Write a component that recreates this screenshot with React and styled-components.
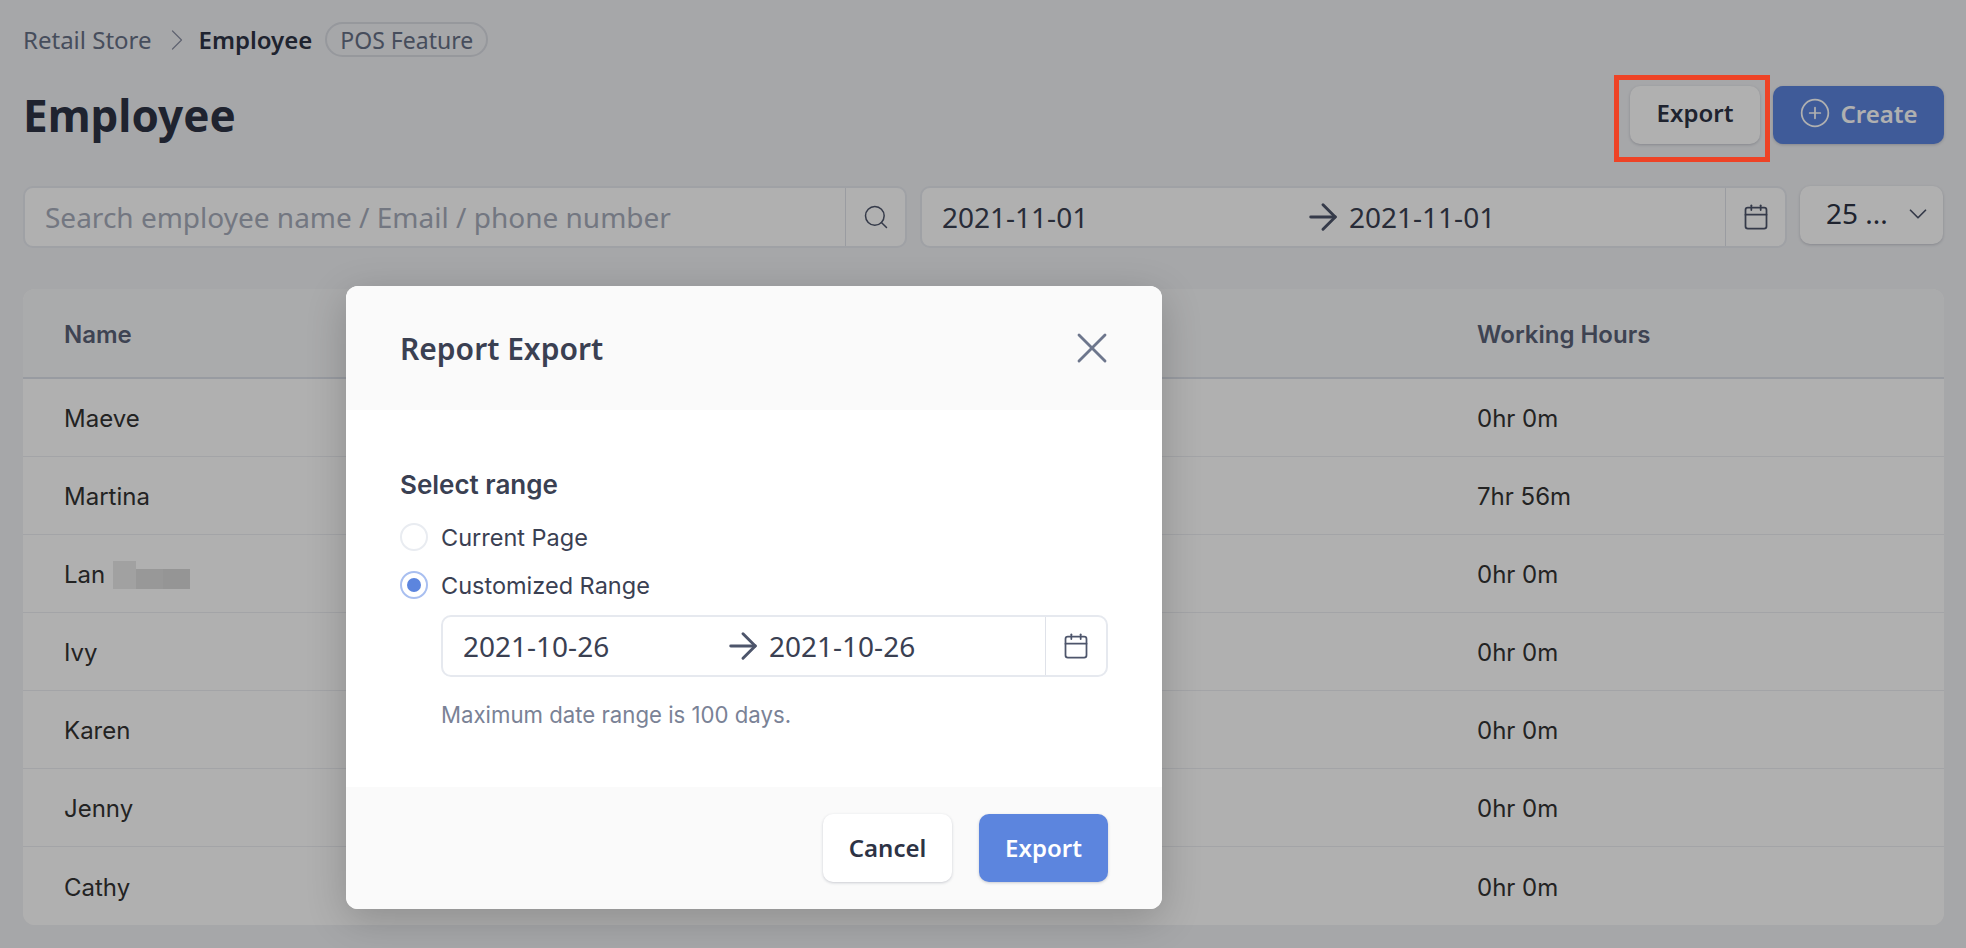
import React from 'react';
import styled, { createGlobalStyle } from 'styled-components';
import { ArrowRight, Calendar, ChevronDown, ChevronRight, CirclePlus, Search, X } from 'lucide-react';

const GlobalStyle = createGlobalStyle`
	html, body {
		margin: 0;
		padding: 0;
		height: 948px;
		overflow: hidden;
		background: #f1f2f5;
	}
	* {
		box-sizing: border-box;
	}
`;

const Page = styled.div`
	position: relative;
	width: 1966px;
	height: 948px;
	padding: 22px 22px 0 23px;
	font-family: "Noto Sans", sans-serif;
	color: #2d3345;
`;

const Breadcrumb = styled.div`
	display: flex;
	align-items: center;
	height: 35px;
	font-size: 24px;
`;

const Crumb = styled.span`
	color: #667086;
`;

const CrumbCurrent = styled.span`
	margin: 0 13px 0 4px;
	font-weight: 600;
	color: #2d3345;
`;

const Pill = styled.span`
	display: flex;
	align-items: center;
	height: 35px;
	padding: 0 13px;
	border: 2px solid #d9dce3;
	border-radius: 18px;
	font-size: 23px;
	color: #667086;
`;

const CrumbArrow = styled(ChevronRight)`
	margin-left: 7px;
	color: #8a91a3;
`;

const HeaderRow = styled.div`
	display: flex;
	align-items: center;
	justify-content: space-between;
	height: 58px;
	margin-top: 29px;
`;

const Title = styled.h1`
	margin: 0;
	font-size: 44px;
	font-weight: 700;
	line-height: 58px;
	color: #2d3345;
`;

const Actions = styled.div`
	display: flex;
	gap: 13px;
`;

const Button = styled.button`
	display: flex;
	align-items: center;
	justify-content: center;
	gap: 9px;
	position: relative;
	width: ${({ $width }) => $width}px;
	height: ${({ $height }) => $height || 58}px;
	padding: 0 0 ${({ $lift }) => $lift || 0}px;
	border: none;
	border-radius: 10px;
	background: ${({ $primary }) => ($primary ? '#5c85de' : '#fff')};
	box-shadow: 0 1px 3px rgba(30, 40, 70, 0.22);
	font-family: "Noto Sans", sans-serif;
	font-size: 24px;
	font-weight: 600;
	color: ${({ $primary }) => ($primary ? '#fff' : '#2d3345')};
`;

const RedMark = styled.span`
	position: absolute;
	top: -11px;
	left: -16px;
	right: -10px;
	bottom: -18px;
	border: 5px solid #ee4326;
	z-index: 5;
`;

const FilterRow = styled.div`
	display: flex;
	gap: 13px;
	margin-top: 42px;
	height: 62px;
`;

const Field = styled.div`
	display: flex;
	align-items: stretch;
	width: ${({ $width }) => $width}px;
	height: 62px;
	background: #fff;
	border: 2px solid #e6e9ef;
	border-radius: 10px;
`;

const FieldBody = styled.div`
	flex: 1;
	display: flex;
	align-items: center;
	padding-left: 20px;
	font-family: "Noto Sans", sans-serif;
	font-size: 28px;
	color: ${({ $muted }) => ($muted ? '#a7adbb' : '#3a4052')};
	white-space: nowrap;
`;

const FieldIcon = styled.div`
	display: flex;
	align-items: center;
	justify-content: center;
	width: ${({ $width }) => $width || 60}px;
	border-left: 1px solid #dfe2e9;
	color: #4d556b;
`;

const DateStart = styled.span`
	width: ${({ $width }) => $width}px;
`;

const ArrowIcon = styled(ArrowRight)`
	margin-right: 5px;
	color: #4d556b;
`;

const Select = styled.div`
	display: flex;
	align-items: center;
	justify-content: space-between;
	width: 143px;
	height: 58px;
	padding: 0 10px 4px 26px;
	background: #fff;
	border-radius: 10px;
	box-shadow: 0 1px 3px rgba(30, 40, 70, 0.22);
	font-size: 28px;
	color: #2d3345;
`;

const SelectArrow = styled(ChevronDown)`
	margin-top: 2px;
	color: #4d556b;
`;

const TableCard = styled.div`
	margin-top: 41px;
	width: 1921px;
	background: #fff;
	border-radius: 12px;
	overflow: hidden;
`;

const Row = styled.div`
	display: grid;
	grid-template-columns: 1413px 1fr;
	align-items: center;
	height: ${({ $head }) => ($head ? 90 : 78)}px;
	padding: 2px 0 0 41px;
	border-bottom: ${({ $head }) => ($head ? '2px solid #dde1e9' : '1px solid #eceef2')};
	background: ${({ $head }) => ($head ? '#f7f8fa' : '#fff')};
	font-family: Inter, sans-serif;
	font-size: 24px;
	font-weight: ${({ $head }) => ($head ? 600 : 400)};
	color: ${({ $head }) => ($head ? '#5a6278' : '#333')};
	&:last-child {
		border-bottom: none;
	}
`;

const NameCell = styled.div`
	display: flex;
	align-items: center;
`;

const Mosaic = styled.span`
	display: flex;
	align-items: flex-end;
	height: 28px;
	margin-left: 8px;
`;

const MosaicPiece = styled.span`
	width: ${({ $width }) => $width}px;
	height: ${({ $height }) => $height}px;
	background: ${({ $color }) => $color};
`;

const Scrim = styled.div`
	position: absolute;
	inset: 0;
	padding: 286px 0 0 346px;
	background: rgba(0, 0, 0, 0.31);
	z-index: 2;
`;

const Modal = styled.div`
	display: flex;
	flex-direction: column;
	width: 816px;
	height: 623px;
	background: #fff;
	border-radius: 12px;
	overflow: hidden;
	box-shadow: 0 10px 40px rgba(0, 0, 0, 0.2);
`;

const ModalHeader = styled.div`
	display: flex;
	align-items: center;
	justify-content: space-between;
	height: 124px;
	padding: 0 54px;
	background: #fafafa;
`;

const ModalTitle = styled.h2`
	margin: 0;
	font-size: 30px;
	font-weight: 600;
	color: #3a4052;
`;

const CloseIcon = styled(X)`
	margin-right: -10px;
	color: #6d768c;
`;

const ModalBody = styled.div`
	flex: 1;
	padding: 58px 54px 0;
	font-family: Inter, sans-serif;
`;

const SectionLabel = styled.div`
	font-size: 26px;
	font-weight: 600;
	line-height: 34px;
	color: #3a4052;
`;

const RadioRow = styled.label`
	display: flex;
	align-items: center;
	gap: 13px;
	height: 28px;
	margin-top: ${({ $gap }) => $gap}px;
	font-size: 23.5px;
	color: #3a4052;
`;

const Radio = styled.span`
	display: flex;
	align-items: center;
	justify-content: center;
	width: 28px;
	height: 28px;
	border-radius: 50%;
	border: 2px solid ${({ $checked }) => ($checked ? '#a9bff0' : '#e9ecf1')};
	&::after {
		content: '';
		display: ${({ $checked }) => ($checked ? 'block' : 'none')};
		width: 14px;
		height: 14px;
		border-radius: 50%;
		background: #5c85de;
	}
`;

const RangeBlock = styled.div`
	margin: 16px 0 0 41px;
`;

const Hint = styled.div`
	margin-top: 25px;
	font-size: 22.2px;
	line-height: 26px;
	color: #7a8296;
`;

const ModalFooter = styled.div`
	display: flex;
	justify-content: flex-end;
	gap: 27px;
	height: 122px;
	padding: 27px 54px 0;
	background: #fafafa;
`;

const people = [
	{ name: 'Maeve', hours: '0hr 0m' },
	{ name: 'Martina', hours: '7hr 56m' },
	{ name: 'Lan', hours: '0hr 0m', blurred: true },
	{ name: 'Ivy', hours: '0hr 0m' },
	{ name: 'Karen', hours: '0hr 0m' },
	{ name: 'Jenny', hours: '0hr 0m' },
	{ name: 'Cathy', hours: '0hr 0m' },
];

const App = () => {
	return (
		<Page>
			<GlobalStyle />
			<Breadcrumb>
				<Crumb>Retail Store</Crumb>
				<CrumbArrow size={36} strokeWidth={0.8} />
				<CrumbCurrent>Employee</CrumbCurrent>
				<Pill>POS Feature</Pill>
			</Breadcrumb>
			<HeaderRow>
				<Title>Employee</Title>
				<Actions>
					<Button $width={130} $lift={6}>
						Export
						<RedMark />
					</Button>
					<Button $width={171} $lift={4} $primary>
						<CirclePlus size={32} strokeWidth={1.3} />
						Create
					</Button>
				</Actions>
			</HeaderRow>
			<FilterRow>
				<Field $width={884}>
					<FieldBody $muted>Search employee name / Email / phone number</FieldBody>
					<FieldIcon>
						<Search size={28} strokeWidth={1.3} />
					</FieldIcon>
				</Field>
				<Field $width={867}>
					<FieldBody>
						<DateStart $width={360}>2021-11-01</DateStart>
						<ArrowIcon size={42} strokeWidth={1.7} />
						2021-11-01
					</FieldBody>
					<FieldIcon>
						<Calendar size={28} strokeWidth={1.5} />
					</FieldIcon>
				</Field>
				<Select>
					25 ...
					<SelectArrow size={30} strokeWidth={1.4} />
				</Select>
			</FilterRow>
			<TableCard>
				<Row $head>
					<div>Name</div>
					<div>Working Hours</div>
				</Row>
				{people.map((person) => (
					<Row key={person.name}>
						<NameCell>
							{person.name}
							{person.blurred && (
								<Mosaic>
									<MosaicPiece $width={23} $height={28} $color="#e9e9e9" />
									<MosaicPiece $width={27} $height={20} $color="#dcdcdc" />
									<MosaicPiece $width={27} $height={20} $color="#d8d8d8" />
								</Mosaic>
							)}
						</NameCell>
						<div>{person.hours}</div>
					</Row>
				))}
			</TableCard>
			<Scrim>
				<Modal>
					<ModalHeader>
						<ModalTitle>Report Export</ModalTitle>
						<CloseIcon size={52} strokeWidth={1.3} />
					</ModalHeader>
					<ModalBody>
						<SectionLabel>Select range</SectionLabel>
						<RadioRow $gap={21}>
							<Radio />
							Current Page
						</RadioRow>
						<RadioRow $gap={20}>
							<Radio $checked />
							Customized Range
						</RadioRow>
						<RangeBlock>
							<Field $width={667}>
								<FieldBody>
									<DateStart $width={259}>2021-10-26</DateStart>
									<ArrowIcon size={42} strokeWidth={1.7} />
									2021-10-26
								</FieldBody>
								<FieldIcon $width={61}>
									<Calendar size={28} strokeWidth={1.5} />
								</FieldIcon>
							</Field>
							<Hint>Maximum date range is 100 days.</Hint>
						</RangeBlock>
					</ModalBody>
					<ModalFooter>
						<Button $width={129} $height={68} $lift={2}>Cancel</Button>
						<Button $width={129} $height={68} $lift={2} $primary>Export</Button>
					</ModalFooter>
				</Modal>
			</Scrim>
		</Page>
	);
};

export default App;
